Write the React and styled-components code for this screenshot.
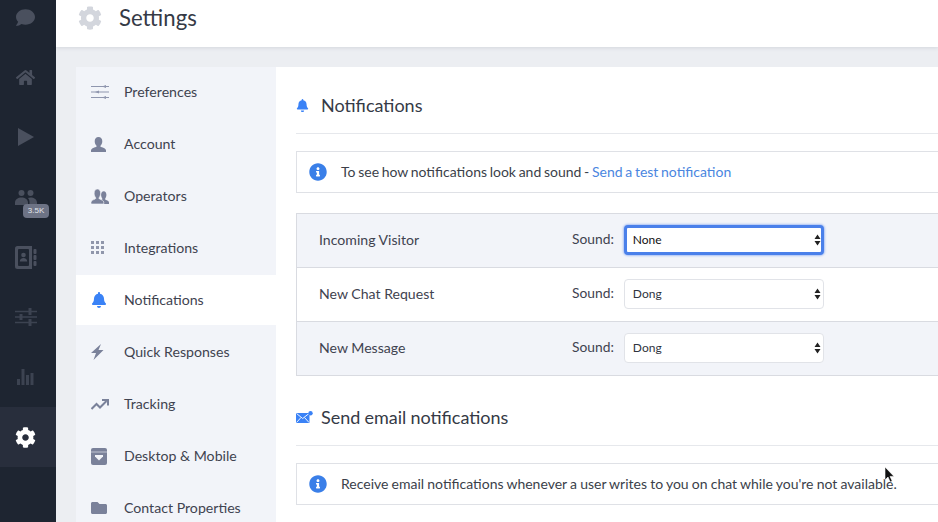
import React from "react";
import styled, { createGlobalStyle } from "styled-components";
import { FaBell, FaCog, FaComment, FaFolder, FaHome, FaInfoCircle } from "react-icons/fa";

const Global = createGlobalStyle`
    html, body {
        margin: 0;
        height: 100%;
        overflow: hidden;
        background: #eceef2;
        font-family: Lato, "Liberation Sans", sans-serif;
        color: #3b3f4a;
    }
`;

const Page = styled.div`
    display: flex;
    width: 938px;
    height: 522px;
    overflow: hidden;
    position: relative;
`;

const Rail = styled.div`
    flex: 0 0 56px;
    background: #1e2531;
    overflow: hidden;
`;

const RailInner = styled.div`
    margin-top: -13px;
`;

const RailItem = styled.div`
    position: relative;
    height: 60px;
    box-sizing: border-box;
    padding-right: 5px;
    display: flex;
    align-items: center;
    justify-content: center;
    color: ${p => (p.$active ? "#ffffff" : p.$dim ? "#3c4351" : "#4a505e")};
    background: ${p => (p.$active ? "#282e3c" : "transparent")};
`;

const Badge = styled.span`
    position: absolute;
    left: 23px;
    top: 37px;
    width: 26px;
    height: 14px;
    border-radius: 4px;
    background: #6d7385;
    color: #e3e5ea;
    font-family: "Liberation Sans", sans-serif;
    font-size: 8px;
    line-height: 14px;
    text-align: center;
`;

const Main = styled.div`
    flex: 1;
    min-width: 0;
    display: flex;
    flex-direction: column;
`;

const Header = styled.header`
    flex: 0 0 47px;
    background: #fff;
    box-shadow: 0 1px 4px rgba(40, 50, 70, 0.12);
    display: flex;
    align-items: center;
    padding: 0 0 11px 22px;
    box-sizing: border-box;
    color: #d3d6dd;
    gap: 17px;
    position: relative;
`;

const Title = styled.h1`
    margin: 0 0 2px;
    font-size: 22.2px;
    font-weight: 400;
    color: #353a46;
`;

const Body = styled.div`
    flex: 1;
    display: flex;
    padding: 20px 0 0 20px;
    min-height: 0;
`;

const Nav = styled.nav`
    flex: 0 0 200px;
    background: #f2f4f9;
    display: flex;
    flex-direction: column;
    gap: 2px;
`;

const NavItem = styled.div`
    flex: 0 0 50px;
    display: flex;
    align-items: center;
    background: ${p => (p.$active ? "#fff" : "transparent")};
    font-size: 14.15px;
    color: #3f4350;
`;

const NavIcon = styled.span`
    flex: 0 0 48px;
    padding-left: 15px;
    box-sizing: border-box;
    display: flex;
    align-items: center;
    color: ${p => (p.$active ? "#3a82f6" : "#7a819a")};
`;

const NavLabel = styled.span`
    margin-bottom: 2px;
`;

const Content = styled.section`
    flex: 1;
    min-width: 0;
    background: #fff;
    padding: 0 0 0 20px;
`;

const Heading = styled.div`
    height: 67px;
    padding-top: 10px;
    display: flex;
    align-items: center;
    gap: ${p => p.$gap}px;
    border-bottom: 1px solid #e6e8ec;
    box-sizing: border-box;
    font-size: 18px;
    word-spacing: -0.5px;
    color: #353a46;
    margin-bottom: 17px;
`;

const Info = styled.div`
    height: 42px;
    box-sizing: border-box;
    border: 1px solid #dfe1e6;
    border-right: 0;
    display: flex;
    align-items: center;
    gap: 14px;
    padding-left: 12px;
    font-size: 14px;
    word-spacing: ${p => p.$wordSpacing}px;
    color: #3b3f4a;
    white-space: nowrap;
    svg {
        color: #3a7fe8;
    }
    span {
        margin-bottom: 2px;
    }
`;

const TestLink = styled.a`
    color: #4a86e0;
`;

const Table = styled.div`
    margin: 20px 0 3px;
    border: 1px solid #d9dbe1;
    border-right: 0;
`;

const Row = styled.div`
    height: 53px;
    display: flex;
    align-items: center;
    background: ${p => (p.$shaded ? "#f2f4f9" : "#fff")};
    & + & {
        border-top: 1px solid #d9dbe1;
    }
`;

const RowLabel = styled.div`
    flex: 0 0 275px;
    padding: 0 0 2px 22px;
    box-sizing: border-box;
    font-size: 14.1px;
    color: #3f4350;
`;

const SoundLabel = styled.label`
    font-size: 13.8px;
    color: #3f4350;
    margin: 0 10px 5px 0;
`;

const SelectWrap = styled.div`
    position: relative;
    width: 200px;
    height: 30px;
    margin-bottom: 1px;
    svg {
        position: absolute;
        right: 3px;
        top: 9px;
    }
`;

const Select = styled.select`
    width: 100%;
    height: 100%;
    appearance: none;
    box-sizing: border-box;
    background: #fff;
    border: 1px solid #e1e3e8;
    border-radius: 4px;
    padding: 0 8px 2px;
    font-family: Lato, "Liberation Sans", sans-serif;
    font-size: 12px;
    color: #30343e;
    outline: none;
    &.focused {
        border: 3px solid #4a80ea;
        padding: 0 6px 2px;
        box-shadow: 0 0 2px 1px rgba(80, 130, 240, 0.45);
        color: #111;
    }
`;

const Pointer = styled.svg`
    position: absolute;
    left: 884px;
    top: 466px;
`;

const BUST = "M7.5 0c2.4 0 3.8 1.8 3.8 4.2 0 2-1 3.6-1.8 4.6-.3.4 0 1 .5 1.2 2.4.8 5 1.6 5 3.2V15H0v-1.8c0-1.6 2.6-2.4 5-3.2.5-.2.8-.8.5-1.2-.8-1-1.8-2.6-1.8-4.6C3.7 1.8 5.1 0 7.5 0z";

const Sliders = () => (
    <svg width="18" height="14" viewBox="0 0 18 14" fill="none" stroke="#8f96ae">
        <path d="M0 1.5h18M0 7h18M0 12.5h18" />
        <path d="M11 1.5 15 0v3zM4 7l4-1.5v3zM11 12.5l4-1.5v3z" fill="#8f96ae" stroke="none" />
    </svg>
);

const RailSliders = () => (
    <svg width="22" height="20" viewBox="0 0 22 20" fill="none" stroke="currentColor">
        <path d="M0 4.5h22M0 10h22M0 15.5h22" strokeWidth="1.4" />
        <path d="M15 1v7M6 7v6M15 12v7" strokeWidth="3" />
    </svg>
);

const Account = () => (
    <svg width="15" height="15" viewBox="0 0 15 15" fill="currentColor">
        <path d={BUST} />
    </svg>
);

const Operators = () => (
    <svg width="18" height="15" viewBox="0 0 18 15" fill="currentColor">
        <path d={BUST} transform="translate(7.5 2.2) scale(.7 .85)" />
        <path d={BUST} stroke="#f2f4f9" strokeWidth="0.7" transform="scale(.85 1)" />
    </svg>
);

const Dots = () => (
    <svg width="14" height="14" viewBox="0 0 14 14" fill="#9096ab">
        {[0, 5, 10].flatMap(y => [0, 5, 10].map(x => <rect key={`${x}-${y}`} x={x} y={y} width="3" height="3" />))}
    </svg>
);

const Bolt = () => (
    <svg width="13" height="16" viewBox="0 0 13 16" fill="currentColor">
        <path d="M10 0 0 9h5l-2.5 7L12.5 6H7.5z" />
    </svg>
);

const Trend = () => (
    <svg width="18" height="11" viewBox="0 0 18 11" fill="none" stroke="currentColor" strokeWidth="2">
        <path d="M0.5 10 5.5 5l3.5 3.5L15.5 2" />
        <path d="M11 1h6v5.5" />
    </svg>
);

const ArchiveBox = () => (
    <svg width="16" height="17" viewBox="0 0 16 17" fill="currentColor">
        <path d="M2 0h12a2 2 0 0 1 2 2v13a2 2 0 0 1-2 2H2a2 2 0 0 1-2-2V2a2 2 0 0 1 2-2z" />
        <path d="M0 4h16" stroke="#f2f4f9" strokeWidth="0.6" />
        <path d="M4 7h8v1.5L8 12.5 4 8.5z" fill="#f2f4f9" />
    </svg>
);

const Contacts = () => (
    <svg width="22" height="23" viewBox="0 0 22 23" fill="currentColor">
        <path d="M2.5 0H17v23H2.5A2.5 2.5 0 0 1 0 20.5v-18A2.5 2.5 0 0 1 2.5 0z" />
        <rect x="3" y="3" width="11" height="17" rx="1" fill="#1e2531" />
        <circle cx="8.5" cy="9" r="2.3" />
        <path d="M4.8 15.5c0-2.4 1.6-3.6 3.7-3.6s3.7 1.2 3.7 3.6z" />
        <rect x="18.5" y="3" width="3" height="5" rx="1" />
        <rect x="18.5" y="9" width="3" height="5" rx="1" />
        <rect x="18.5" y="15" width="3" height="5" rx="1" />
    </svg>
);

const Visitors = () => (
    <svg width="22" height="15" viewBox="0 0 22 15" fill="currentColor">
        <circle cx="6.5" cy="3" r="3" />
        <circle cx="15.5" cy="3" r="3" />
        <path d="M0 15v-2.5C0 9.5 3 7.5 6.5 7.5s6.5 2 6.5 5V15zM14.5 15v-3c0-1.600-.6-3-1.600-4 .8-.3 1.700-.5 2.600-.5 3.500 0 6.500 2 6.500 5V15z" />
    </svg>
);

const Play = () => (
    <svg width="16" height="18" viewBox="0 0 16 18" fill="currentColor">
        <path d="M0 0 16 9 0 18z" />
    </svg>
);

const Bars = () => (
    <svg width="17" height="16" viewBox="0 0 17 16" fill="currentColor">
        <rect x="0" y="10" width="3" height="6" />
        <rect x="4.5" y="0" width="3" height="16" />
        <rect x="9" y="6" width="3" height="10" />
        <rect x="13.5" y="4" width="3" height="12" />
    </svg>
);

const MailDot = () => (
    <svg width="17" height="12" viewBox="0 0 17 12">
        <path d="M0 2h13.5v10H0z" fill="#3a82f6" />
        <path d="M0.5 2.5 6.7 7.5 13 2.5M0.5 11.5 5 6.5M13 11.5 8.5 6.5" stroke="#fff" strokeWidth="0.9" fill="none" />
        <circle cx="14.5" cy="2.2" r="2.2" fill="#3a82f6" />
    </svg>
);

const Arrows = () => (
    <svg width="7" height="12" viewBox="0 0 7 12" fill="#222">
        <path d="M3.5 0.5 6.5 5H0.5zM3.5 11.5 0.5 7h6z" />
    </svg>
);

const navItems = [
    ["Preferences", <Sliders />],
    ["Account", <Account />],
    ["Operators", <Operators />],
    ["Integrations", <Dots />],
    ["Notifications", <FaBell size={16} />, true],
    ["Quick Responses", <Bolt />],
    ["Tracking", <Trend />],
    ["Desktop & Mobile", <ArchiveBox />],
    ["Contact Properties", <FaFolder size={16} />],
];

const sounds = [
    ["Incoming Visitor", "None", true],
    ["New Chat Request", "Dong", false],
    ["New Message", "Dong", true],
];

export default function App() {
    return (
        <Page>
            <Global />
            <Rail>
                <RailInner>
                    <RailItem><FaComment size={19} /></RailItem>
                    <RailItem><FaHome size={19} /></RailItem>
                    <RailItem><Play /></RailItem>
                    <RailItem><Visitors /><Badge>3.5K</Badge></RailItem>
                    <RailItem><Contacts /></RailItem>
                    <RailItem $dim><RailSliders /></RailItem>
                    <RailItem $dim><Bars /></RailItem>
                    <RailItem $active><FaCog size={21} /></RailItem>
                </RailInner>
            </Rail>
            <Main>
                <Header>
                    <FaCog size={24} />
                    <Title>Settings</Title>
                </Header>
                <Body>
                    <Nav>
                        {navItems.map(([label, icon, active]) => (
                            <NavItem key={label} $active={active}>
                                <NavIcon $active={active}>{icon}</NavIcon>
                                <NavLabel>{label}</NavLabel>
                            </NavItem>
                        ))}
                    </Nav>
                    <Content>
                        <Heading $gap={12}>
                            <FaBell size={13} color="#3a82f6" />
                            Notifications
                        </Heading>
                        <Info $wordSpacing={-0.9}>
                            <FaInfoCircle size={18} />
                            <span>To see how notifications look and sound - <TestLink>Send a test notification</TestLink></span>
                        </Info>
                        <Table>
                            {sounds.map(([label, value, shaded], i) => (
                                <Row key={label} $shaded={shaded}>
                                    <RowLabel>{label}</RowLabel>
                                    <SoundLabel>Sound:</SoundLabel>
                                    <SelectWrap>
                                        <Select className={i === 0 ? "focused" : ""} defaultValue={value}>
                                            <option>None</option>
                                            <option>Dong</option>
                                        </Select>
                                        <Arrows />
                                    </SelectWrap>
                                </Row>
                            ))}
                        </Table>
                        <Heading $gap={8}>
                            <MailDot />
                            Send email notifications
                        </Heading>
                        <Info $wordSpacing={-0.42}>
                            <FaInfoCircle size={18} />
                            <span>Receive email notifications whenever a user writes to you on chat while you're not available.</span>
                        </Info>
                    </Content>
                </Body>
            </Main>
            <Pointer width="11" height="18" viewBox="0 0 11 18">
                <path d="M1 1v13l3-3 2.2 5 2-1-2.2-4.6H10z" fill="#111" stroke="#fff" strokeWidth="0.6" />
            </Pointer>
        </Page>
    );
}
